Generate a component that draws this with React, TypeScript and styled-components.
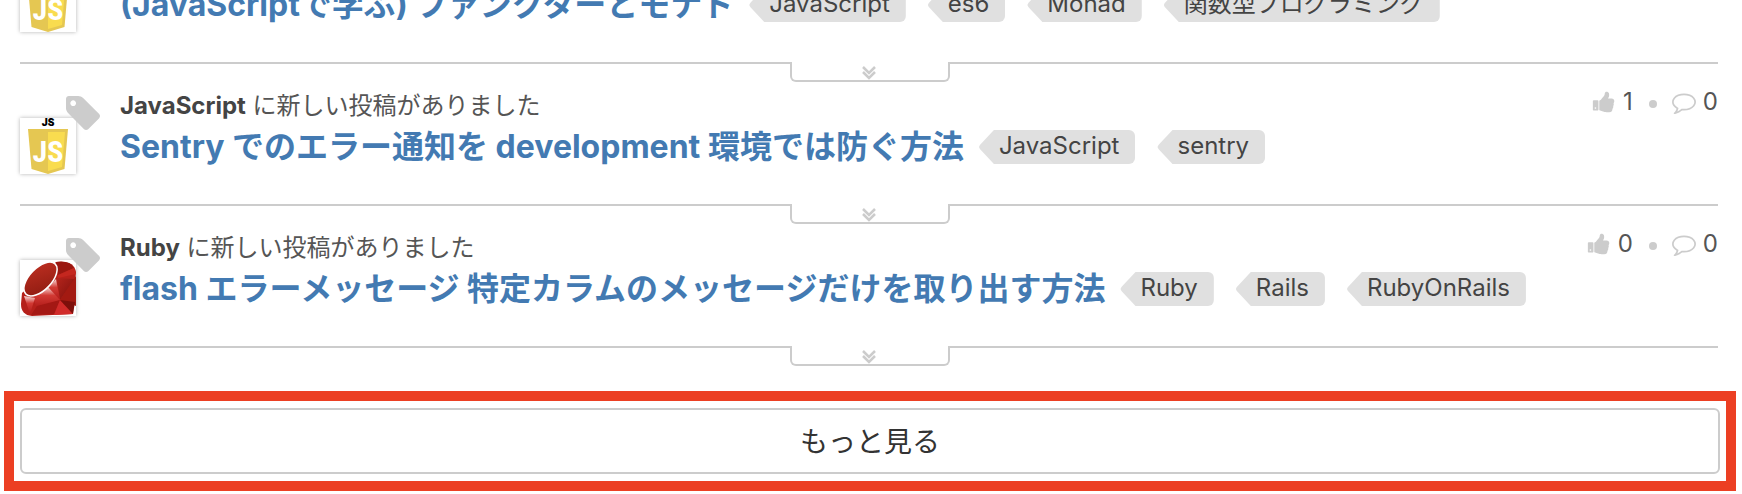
import React from "react";
import styled, { createGlobalStyle } from "styled-components";

const colors = {
  line: "#cccccc",
  text: "#444444",
  muted: "#555555",
  link: "#437ab2",
  tag: "#e0e0e0",
  frame: "#ec3f23",
};

const GlobalStyle = createGlobalStyle`
  *, *::before, *::after { box-sizing: border-box; }
  body {
    margin: 0;
    background: #ffffff;
    color: ${colors.text};
    font-family: Inter, "Noto Sans CJK JP", sans-serif;
    font-size: 24px;
    line-height: 32px;
  }
`;

const Page = styled.main`
  display: flex;
  flex-direction: column;
  gap: 43px;
  padding-bottom: 3px;
  overflow: hidden;
`;

/* The feed is scrolled so that its first entry is cut by the top edge. */
const Feed = styled.ul`
  list-style: none;
  margin: -78px 24px 0 20px;
  padding: 0;
`;

const Entry = styled.li`
  position: relative;
  display: grid;
  grid-template-columns: 56px minmax(0, 1fr) auto;
  column-gap: 44px;
  padding-bottom: 30px;
  border-bottom: 2px solid ${colors.line};
`;

const AvatarCell = styled.div`
  position: relative;
  padding-top: 54px;
`;

const Avatar = styled.a`
  display: block;
  height: 56px;
  background: #ffffff;
  box-shadow: 0 0 4px rgba(0, 0, 0, 0.3);

  svg { display: block; }
`;

const TagBadge = styled.svg`
  position: absolute;
  top: 32px;
  right: -24px;
  fill: ${colors.line};
`;

const Body = styled.div`
  display: flex;
  flex-direction: column;
  justify-content: flex-end;
  gap: 4px;
  padding-bottom: 6px;
`;

const Notice = styled.p`
  margin: 0;
  color: ${colors.muted};

  strong {
    color: ${colors.text};
    font-weight: 700;
  }
`;

const Headline = styled.div`
  display: flex;
  align-items: center;
  gap: 15px;
  height: 42px;
  white-space: nowrap;
`;

const Title = styled.a`
  color: ${colors.link};
  font-size: 32px;
  line-height: 42px;
  font-weight: 700;
  text-decoration: none;
`;

const Tags = styled.div`
  display: flex;
  gap: 22px;
`;

const Tag = styled.a`
  height: 34px;
  padding: 0 16px 0 20px;
  border-radius: 0 6px 6px 0;
  background: ${colors.tag};
  clip-path: polygon(0 50%, 1px 44%, 15px 0, 100% 0, 100% 100%, 15px 100%, 1px 56%);
  color: ${colors.text};
  text-decoration: none;
`;

const Stats = styled.div`
  display: flex;
  align-items: center;
  height: 32px;
  margin-top: 22px;
  color: ${colors.muted};
`;

const Stat = styled.span`
  display: flex;
  align-items: center;
  gap: 7px;

  svg { fill: ${colors.line}; }
`;

const Dot = styled.span`
  width: 8px;
  height: 8px;
  margin: 4px 15px 0 16px;
  border-radius: 50%;
  background: ${colors.line};
`;

const Expand = styled.button`
  position: absolute;
  top: 100%;
  left: calc(50% - 79px);
  z-index: 1;
  display: flex;
  justify-content: center;
  width: 160px;
  height: 20px;
  padding: 4px 2px 0 0;
  border: 2px solid ${colors.line};
  border-top: 0;
  border-radius: 0 0 6px 6px;
  background: #ffffff;
`;

const Frame = styled.div`
  margin: 0 6px 0 4px;
  padding: 7px 6px;
  border: 10px solid ${colors.frame};
`;

const MoreButton = styled.button`
  display: block;
  width: 100%;
  height: 66px;
  padding: 0 0 2px;
  border: 2px solid ${colors.line};
  border-radius: 6px;
  background: #ffffff;
  color: #333333;
  font-family: inherit;
  font-size: 28px;
`;

const JsLogo = () => (
  <svg width="56" height="56" viewBox="0 0 56 56" aria-hidden="true">
    <text x="28" y="8" textAnchor="middle" fontFamily="Inter, sans-serif" fontSize="10" fontWeight="900" fill="#000">JS</text>
    <path d="M8 11H48L44.500 51L28 56L11.500 51Z" fill="#e5c752" />
    <path d="M28 14H45L42 49L28 53Z" fill="#f9dc4f" />
    <text x="28" y="44" textAnchor="middle" fontFamily="'Roboto Condensed', 'Liberation Sans Narrow', Roboto, sans-serif" fontSize="30" fontWeight="700" fill="#fff">JS</text>
  </svg>
);

const RubyLogo = () => (
  <svg width="56" height="56" viewBox="0 0 56 56" aria-hidden="true">
    <defs>
      <linearGradient id="rubyFace" x1="0" y1="1" x2="1" y2="0">
        <stop offset="0" stopColor="#8c1a10" />
        <stop offset="1" stopColor="#c03022" />
      </linearGradient>
      <linearGradient id="rubyLight" x1="0" y1="0" x2="0" y2="1">
        <stop offset="0" stopColor="#f6dcda" />
        <stop offset="0.4" stopColor="#d23a34" />
        <stop offset="1" stopColor="#b01a18" />
      </linearGradient>
      <linearGradient id="rubyEdge" x1="0" y1="0" x2="1" y2="1">
        <stop offset="0" stopColor="#b3241c" />
        <stop offset="1" stopColor="#7d0f0b" />
      </linearGradient>
    </defs>
    <path d="M36 2Q54 0 56 12L53 54L12 56Q1 55 1 44L2 33Z" fill="#b5201a" />
    <path d="M36 2Q50 0 54 8L38 15Z" fill="#9a1710" />
    <path d="M54 8L56 14L38 18L38 15Z" fill="#c4271f" />
    <path d="M37 18L55 19L40 40Z" fill="url(#rubyEdge)" />
    <path d="M56 16V46L40 40Z" fill="#a31a12" />
    <path d="M36 19L40 40L27 29Z" fill="url(#rubyLight)" />
    <path d="M28 27L40 40L17 48L12 36Z" fill="url(#rubyLight)" />
    <path d="M4 36L15 38L10 54Z" fill="url(#rubyLight)" />
    <path d="M17 46L40 40L34 54L11 55Z" fill="#a41814" />
    <path d="M40 40L53 54L34 55Z" fill="#d12b2a" />
    <path d="M40 40L55 42L53 54Z" fill="#7d0f0b" />
    <ellipse cx="20.500" cy="19" rx="21" ry="11" transform="rotate(-46 20.500 19)" fill="url(#rubyFace)" stroke="#fff" strokeWidth="1.500" />
  </svg>
);

const ThumbIcon = () => (
  <svg width="24" height="24" viewBox="0 0 1792 1792" aria-hidden="true">
    <path d="M320 1344q0-26-19-45t-45-19q-27 0-45.500 19t-18.500 45q0 27 18.500 45.500t45.500 18.500q26 0 45-18.500t19-45.500zm160-512v640q0 26-19 45t-45 19h-288q-26 0-45-19t-19-45v-640q0-26 19-45t45-19h288q26 0 45 19t19 45zm1184 0q0 86-55 149 15 44 15 76 3 76-43 137 17 56 0 117-15 57-54 94 9 112-49 181-64 76-197 78h-129q-66 0-144-15.500t-121.500-29-120.500-39.500q-123-43-158-44-26-1-45-19.500t-19-44.500v-641q0-25 18-43.500t43-20.500q24-2 76-59t101-121q68-87 101-120 18-18 31-48t17.500-48.500 13.500-60.500q7-39 12.500-61t19.500-52 34-50q19-19 45-19 46 0 82.500 10.500t60 26 40 40.500 24 45 12 50 5 45 .5 39q0 38-9.500 76t-19 60-27.500 56q-3 6-10 18t-11 22-8 24h277q78 0 135 57t57 135z" />
  </svg>
);

const CommentIcon = () => (
  <svg width="24" height="24" viewBox="0 0 1792 1792" aria-hidden="true">
    <path d="M896 384q-204 0-381.500 69.500t-282 187.500-104.500 255q0 112 71.500 213.500t201.500 175.500l87 50-27 96q-24 91-70 172 152-63 275-171l43-38 57 6q69 8 130 8 204 0 381.500-69.500t282-187.500 104.500-255-104.500-255-282-187.500-381.500-69.500zm896 512q0 174-120 321.500t-326 233-450 85.500q-70 0-145-8-198 175-460 242-49 14-114 22h-5q-15 0-27-10.500t-16-27.500v-1q-3-4-.5-12t2-10 4.500-9.500l6-9 7-8.500 8-9q7-8 31-34.500t34.500-38 31-39.500 32.500-51 27-59 26-76q-157-89-247.500-220t-90.500-281q0-174 120-321.500t326-233 450-85.500 450 85.500 326 233 120 321.500z" />
  </svg>
);

const ChevronsIcon = () => (
  <svg width="14" height="14" viewBox="0 0 14 14" fill="none" stroke={colors.line} strokeWidth="2.500" aria-hidden="true">
    <path d="M1 1L7 7L13 1M1 6L7 12L13 6" />
  </svg>
);

type Item = {
  source: "JavaScript" | "Ruby";
  title: string;
  tags: string[];
  likes?: number;
  comments?: number;
};

const items: Item[] = [
  {
    source: "JavaScript",
    title: "(JavaScriptで学ぶ) ファンクターとモナド",
    tags: ["JavaScript", "es6", "Monad", "関数型プログラミング"],
  },
  {
    source: "JavaScript",
    title: "Sentry でのエラー通知を development 環境では防ぐ方法",
    tags: ["JavaScript", "sentry"],
    likes: 1,
    comments: 0,
  },
  {
    source: "Ruby",
    title: "flash エラーメッセージ 特定カラムのメッセージだけを取り出す方法",
    tags: ["Ruby", "Rails", "RubyOnRails"],
    likes: 0,
    comments: 0,
  },
];

const FeedEntry = ({ item }: { item: Item }) => {
  const full = item.likes !== undefined;
  return (
    <Entry>
      <AvatarCell>
        <Avatar href="#" aria-label={item.source}>
          {item.source === "Ruby" ? <RubyLogo /> : <JsLogo />}
        </Avatar>
        {full && (
          <TagBadge width="34" height="34" viewBox="128 128 1515 1515" aria-hidden="true">
            <path d="M576 448q0-53-37.500-90.500t-90.500-37.500-90.500 37.500-37.500 90.500 37.500 90.500 90.500 37.500 90.500-37.500 37.500-90.500zm1067 576q0 53-37 90l-491 492q-39 37-91 37-53 0-90-37l-715-716q-38-37-64.500-101t-26.500-117v-416q0-52 38-90t90-38h416q53 0 117 26.500t102 64.500l715 714q37 39 37 91z" />
          </TagBadge>
        )}
      </AvatarCell>
      <Body>
        {full && (
          <Notice>
            <strong>{item.source}</strong> に新しい投稿がありました
          </Notice>
        )}
        <Headline>
          <Title href="#">{item.title}</Title>
          <Tags>
            {item.tags.map((tag) => (
              <Tag key={tag} href="#">{tag}</Tag>
            ))}
          </Tags>
        </Headline>
      </Body>
      {full && (
        <Stats>
          <Stat><ThumbIcon />{item.likes}</Stat>
          <Dot />
          <Stat><CommentIcon />{item.comments}</Stat>
        </Stats>
      )}
      <Expand type="button" aria-label="Expand">
        <ChevronsIcon />
      </Expand>
    </Entry>
  );
};

export default function App() {
  return (
    <>
      <GlobalStyle />
      <Page>
        <Feed>
          {items.map((item) => (
            <FeedEntry key={item.title} item={item} />
          ))}
        </Feed>
        <Frame>
          <MoreButton type="button">もっと見る</MoreButton>
        </Frame>
      </Page>
    </>
  );
}
